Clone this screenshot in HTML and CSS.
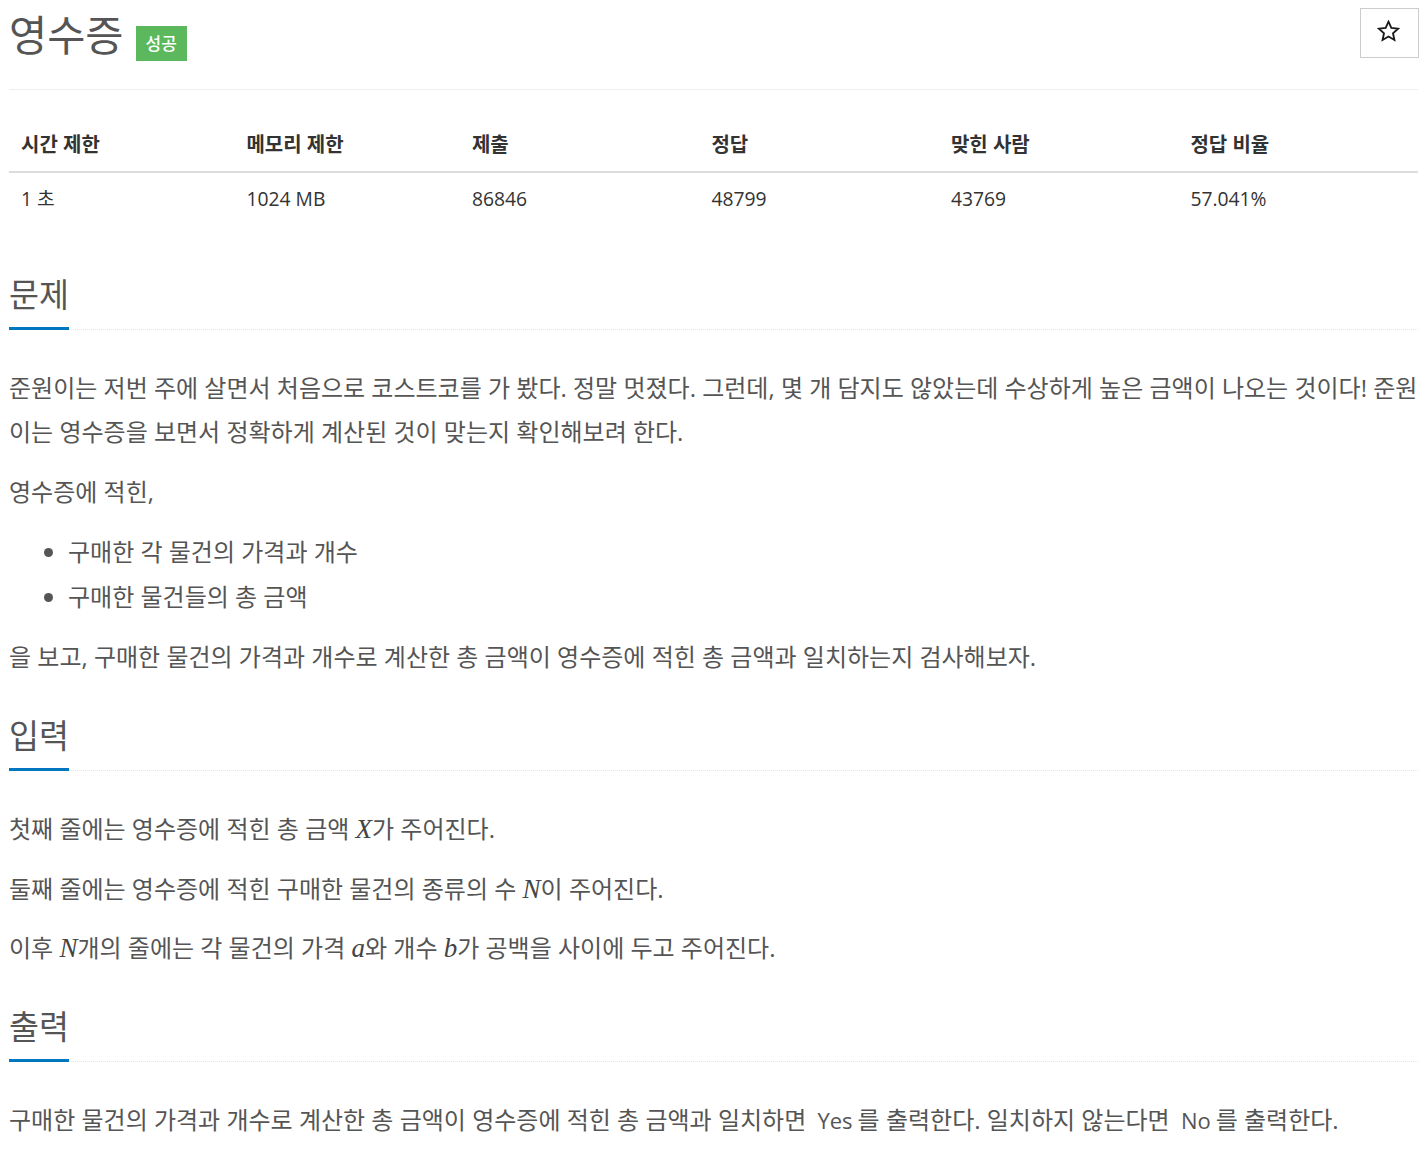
FILE: index.html
```html
<!DOCTYPE html>
<html lang="ko">
<head>
<meta charset="utf-8">
<title>영수증</title>
<link rel="stylesheet" href="styles.css">
</head>
<body>
<div class="page">
  <div class="page-header">
    <h1 class="title"><span class="title-text">영수증</span><span class="badge">성공</span></h1>
    <button class="star-btn" type="button" aria-label="즐겨찾기">
      <svg class="star-icon" width="23" height="22" viewBox="0 0 24 23" aria-hidden="true">
        <path d="M12 1.8l2.95 6.55 7.05.75-5.3 4.75 1.5 7.05L12 17.3l-6.2 3.6 1.5-7.05L2 9.1l7.05-.75z" fill="none" stroke="#1a1a1a" stroke-width="1.9" stroke-linejoin="miter"/>
      </svg>
    </button>
  </div>

  <table class="info">
    <thead>
      <tr>
        <th class="c1">시간 제한</th>
        <th class="c2">메모리 제한</th>
        <th class="c3">제출</th>
        <th class="c4">정답</th>
        <th class="c5">맞힌 사람</th>
        <th class="c6">정답 비율</th>
      </tr>
    </thead>
    <tbody>
      <tr>
        <td>1 초</td>
        <td>1024 MB</td>
        <td>86846</td>
        <td>48799</td>
        <td>43769</td>
        <td>57.041%</td>
      </tr>
    </tbody>
  </table>

  <section class="section first">
    <div class="headline"><h2>문제</h2></div>
    <div class="text">
      <p>준원이는 저번 주에 살면서 처음으로 코스트코를 가 봤다. 정말 멋졌다. 그런데, 몇 개 담지도 않았는데 수상하게 높은 금액이 나오는 것이다! 준원이는 영수증을 보면서 정확하게 계산된 것이 맞는지 확인해보려 한다.</p>
      <p>영수증에 적힌,</p>
      <ul>
        <li>구매한 각 물건의 가격과 개수</li>
        <li>구매한 물건들의 총 금액</li>
      </ul>
      <p>을 보고, 구매한 물건의 가격과 개수로 계산한 총 금액이 영수증에 적힌 총 금액과 일치하는지 검사해보자.</p>
    </div>
  </section>

  <section class="section">
    <div class="headline"><h2>입력</h2></div>
    <div class="text">
      <p>첫째 줄에는 영수증에 적힌 총 금액 <span class="math">X</span>가 주어진다.</p>
      <p>둘째 줄에는 영수증에 적힌 구매한 물건의 종류의 수 <span class="math">N</span>이 주어진다.</p>
      <p>이후 <span class="math">N</span>개의 줄에는 각 물건의 가격 <span class="math">a</span>와 개수 <span class="math">b</span>가 공백을 사이에 두고 주어진다.</p>
    </div>
  </section>

  <section class="section">
    <div class="headline"><h2>출력</h2></div>
    <div class="text">
      <p>구매한 물건의 가격과 개수로 계산한 총 금액이 영수증에 적힌 총 금액과 일치하면 <code>Yes</code>를 출력한다. 일치하지 않는다면 <code>No</code>를 출력한다.</p>
    </div>
  </section>
</div>
</body>
</html>
```

FILE: styles.css
```css
html, body {
  margin: 0;
  padding: 0;
  background: #fff;
}

body {
  font-family: "Open Sans", "Noto Sans CJK KR", sans-serif;
  color: #555;
}

.page {
  padding: 0 8px 0 9px;
}

.page-header {
  display: flex;
  justify-content: space-between;
  align-items: flex-start;
  padding-top: 8px;
  padding-bottom: 27px;
  border-bottom: 1px solid #eee;
}

.title {
  display: flex;
  align-items: center;
  margin: 0;
  height: 54px;
  font-weight: normal;
}

.title-text {
  font-size: 41.5px;
  line-height: 54px;
  color: #555;
}

.badge {
  margin-left: 12px;
  margin-top: 17px;
  height: 35px;
  line-height: 35px;
  padding: 0 10px;
  background: #5cb85c;
  color: #fff;
  font-size: 17px;
  font-weight: 500;
}

.star-btn {
  display: flex;
  align-items: center;
  justify-content: center;
  width: 59px;
  height: 50px;
  background: #fff;
  border: 1px solid #ccc;
  border-radius: 0;
  padding: 0 3px 4px 0;
  margin: 0 -1px 0 0;
}

.star-icon {
  display: block;
}

.info {
  width: 100%;
  border-collapse: collapse;
  margin-top: 29px;
  color: #333;
}

.info th {
  text-align: left;
  font-size: 20px;
  font-weight: bold;
  line-height: 26px;
  padding: 13px 12px;
  border-bottom: 2px solid #ddd;
  color: #333;
}

.info td {
  font-size: 19.3px;
  line-height: 26px;
  padding: 13px 12px;
  color: #333;
}

.c1 { width: 16%; }
.c2 { width: 16%; }
.c3 { width: 17%; }
.c4 { width: 17%; }
.c5 { width: 17%; }
.c6 { width: 17%; }

.section {
  margin-top: 40px;
}

.section.first {
  margin-top: 53px;
}

.headline {
  border-bottom: 1px dotted #e4e4e4;
}

.headline h2 {
  display: inline-block;
  margin: 0 0 -1px 0;
  font-size: 32.6px;
  font-weight: normal;
  line-height: 34px;
  padding-bottom: 15px;
  border-bottom: 3px solid #0076c0;
  color: #555;
}

.text {
  padding-top: 36px;
  font-size: 24px;
  line-height: 44px;
  color: #555;
}

.text p {
  margin: 0 0 15.5px 0;
}

.text p:last-child {
  margin-bottom: 0;
}

.text ul {
  margin: 0 0 16px 0;
  padding-left: 59px;
}

.text li {
  line-height: 45px;
}

.math {
  font-family: "Liberation Serif", "DejaVu Serif", serif;
  font-style: italic;
  font-size: 27px;
  color: #444;
}

code {
  font-family: "Open Sans", sans-serif;
  font-size: 22px;
  padding: 0 5px;
  color: #555;
}
```
